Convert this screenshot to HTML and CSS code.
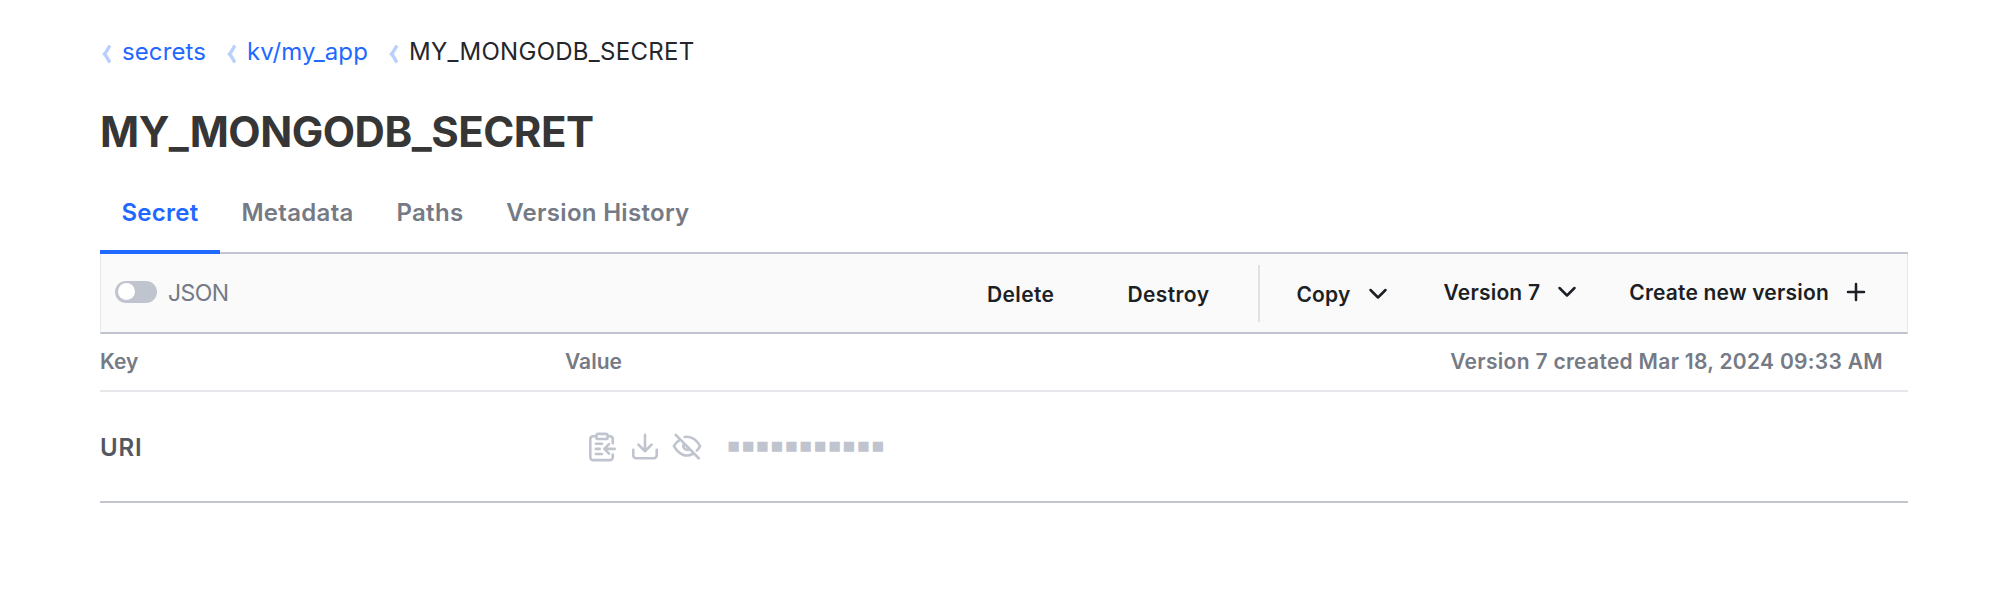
FILE: index.html
```html
<!DOCTYPE html>
<html lang="en">
<head>
  <meta charset="UTF-8" />
  <meta name="viewport" content="width=device-width, initial-scale=1.0"/>
  <title>MY_MONGODB_SECRET</title>
  <link rel="stylesheet" href="styles.css">
</head>
<body>
  <div class="page">
    <nav class="breadcrumb">
      <a class="crumb" href="#"><svg class="sep" viewBox="0 0 10 20"><path d="M8 1.5C6 4 5.5 7 2.5 10C5.5 13 6 16 8 18.5"/></svg><span>secrets</span></a>
      <a class="crumb" href="#"><svg class="sep" viewBox="0 0 10 20"><path d="M8 1.5C6 4 5.5 7 2.5 10C5.5 13 6 16 8 18.5"/></svg><span>kv/my_app</span></a>
      <span class="crumb current"><svg class="sep" viewBox="0 0 10 20"><path d="M8 1.5C6 4 5.5 7 2.5 10C5.5 13 6 16 8 18.5"/></svg><span>MY_MONGODB_SECRET</span></span>
    </nav>

    <h1>MY_MONGODB_SECRET</h1>

    <div class="tabs">
      <a class="tab active" href="#">Secret</a>
      <a class="tab" href="#">Metadata</a>
      <a class="tab" href="#">Paths</a>
      <a class="tab" href="#">Version History</a>
    </div>

    <div class="toolbar">
      <div class="toggle"></div>
      <span class="toggle-label">JSON</span>
      <div class="actions">
        <button class="delete">Delete</button>
        <button class="destroy">Destroy</button>
        <div class="divider"></div>
        <button class="copy">Copy <svg class="chevron" viewBox="0 0 20 20"><path d="M2.5 6L10 13.5L17.5 6"/></svg></button>
        <button class="version">Version 7 <svg class="chevron" viewBox="0 0 20 20"><path d="M2.5 6L10 13.5L17.5 6"/></svg></button>
        <button class="create">Create new version <svg class="plus" viewBox="0 0 20 20"><path d="M10 2V18M2 10H18"/></svg></button>
      </div>
    </div>

    <div class="table-head">
      <span class="col-key">Key</span>
      <span class="col-value">Value</span>
      <span class="created">Version 7 created Mar 18, 2024 09:33 AM</span>
    </div>

    <div class="table-row">
      <span class="col-key">URI</span>
      <div class="secret">
        <svg class="icon" viewBox="0 0 32 32"><path d="M10 4.5H6.5A3 3 0 0 0 3.5 7.5V27A3 3 0 0 0 6.5 30H24.5A3 3 0 0 0 27.5 27V24M22 4.5H24.5A3 3 0 0 1 27.5 7.5V12M12 2H20A2 2 0 0 1 22 4V5.5A2 2 0 0 1 20 7.5H12A2 2 0 0 1 10 5.5V4A2 2 0 0 1 12 2ZM9.5 12.5H16M9.5 18H13.5M9.5 23.5H16M29.5 18H18.5M23.5 13L18.5 18L23.5 23"/></svg>
        <svg class="icon" viewBox="0 0 32 32"><path d="M16 3V20M9 13.5L16 20.5L23 13.5M3.5 19V25A3 3 0 0 0 6.5 28H25.5A3 3 0 0 0 28.5 25V19"/></svg>
        <svg class="icon" viewBox="0 0 32 32"><path d="M4 3L28.5 28M13.5 5.3C20.5 4 26 8 30 15C29.2 16.8 28 18.4 26.5 19.7M8 8.5C5.7 10.2 3.5 12.5 2 15C7 23.5 14.5 27.5 22 23.5M12.8 12.5A4.3 4.3 0 0 0 18.5 18.5"/></svg>
        <span class="masked">■■■■■■■■■■■</span>
      </div>
    </div>
  </div>
</body>
</html>
```
FILE: styles.css
```css
* {
  box-sizing: border-box;
}

body {
  margin: 0;
  background: #fff;
  font-family: Inter, sans-serif;
  color: #1c1f24;
}

a {
  text-decoration: none;
}

svg {
  fill: none;
  stroke: currentColor;
  flex-shrink: 0;
}

.page {
  width: 1808px;
  margin-left: 100px;
  padding-top: 31px;
}

.breadcrumb {
  display: flex;
  align-items: center;
  height: 40px;
  gap: 19px;
  font-size: 24px;
  white-space: nowrap;
}

.crumb {
  display: flex;
  align-items: center;
  letter-spacing: 0.1px;
  color: #1f69ff;
}

.crumb.current {
  letter-spacing: 0.28px;
  color: #25262b;
}

.sep {
  width: 10px;
  height: 20px;
  margin: 5px 10px 0 2px;
  stroke: #b9d0ff;
  stroke-width: 3.4;
}

h1 {
  margin: 31px 0 0;
  height: 60px;
  line-height: 60px;
  font-size: 42px;
  font-weight: 700;
  letter-spacing: -0.5px;
  color: #363636;
}

.tabs {
  display: flex;
  height: 92px;
  border-bottom: 2px solid #c2c5cf;
}

.tab {
  height: 92px;
  padding: 0 21.4px;
  line-height: 102px;
  font-size: 24px;
  font-weight: 600;
  letter-spacing: 0.3px;
  color: #757a85;
}

.tab.active {
  border-bottom: 4px solid #1f69ff;
  color: #1f69ff;
}

.toolbar {
  display: flex;
  align-items: center;
  height: 80px;
  padding: 0 41px 0 14px;
  background: #fafafa;
  border: 1px solid #e5e7eb;
  border-top: 0;
  border-bottom: 2px solid #bfc4cf;
}

.toggle {
  width: 42px;
  height: 22px;
  margin-top: -3px;
  padding: 2px 3px;
  border-radius: 11px;
  background: #bfc4ce;
}

.toggle::before {
  content: "";
  display: block;
  width: 17px;
  height: 17px;
  border-radius: 50%;
  background: #fff;
}

.toggle-label {
  margin-left: 11px;
  font-size: 23px;
  letter-spacing: -0.6px;
  color: #757a85;
}

.actions {
  display: flex;
  align-items: center;
  margin-left: auto;
}

button {
  display: flex;
  align-items: center;
  margin-top: 2px;
  padding: 0;
  border: 0;
  background: none;
  font-family: inherit;
  font-size: 21px;
  font-weight: 600;
  letter-spacing: 0.2px;
  color: #1c1f24;
  white-space: nowrap;
}

.delete,
.destroy {
  letter-spacing: 0.4px;
}

.destroy {
  margin-left: 73px;
}

.divider {
  width: 2px;
  height: 57px;
  margin: 0 36px 0 49px;
  background: #dee1e6;
}

.chevron,
.plus {
  width: 20px;
  height: 20px;
  margin-left: 17px;
  stroke-width: 2.5;
  stroke-linecap: round;
  stroke-linejoin: round;
}

.version {
  margin: -2px 0 0 56px;
}

.create {
  margin: -2px 0 0 52px;
}

.table-head {
  display: flex;
  align-items: center;
  height: 58px;
  padding: 0 25px 1px 0;
  border-bottom: 2px solid #e5e7eb;
  font-size: 21px;
  font-weight: 600;
  color: #757a85;
}

.col-key {
  width: 465px;
}

.created {
  margin-left: auto;
  letter-spacing: 0.3px;
}

.table-row {
  display: flex;
  align-items: center;
  height: 111px;
  border-bottom: 2px solid #c2c5cf;
  font-size: 24px;
  font-weight: 600;
  color: #525761;
}

.table-row .col-key {
  padding-top: 1px;
  letter-spacing: 0.9px;
}

.secret {
  display: flex;
  align-items: center;
  padding-left: 22px;
  gap: 12.5px;
  color: #bfc4ce;
}

.icon {
  width: 30px;
  height: 30px;
  stroke-width: 2.8;
  stroke-linecap: round;
  stroke-linejoin: round;
}

.masked {
  margin: -3px 0 0 13px;
  font-family: "DejaVu Sans", sans-serif;
  font-size: 13.3px;
  font-weight: 400;
  letter-spacing: 1.85px;
}
```
